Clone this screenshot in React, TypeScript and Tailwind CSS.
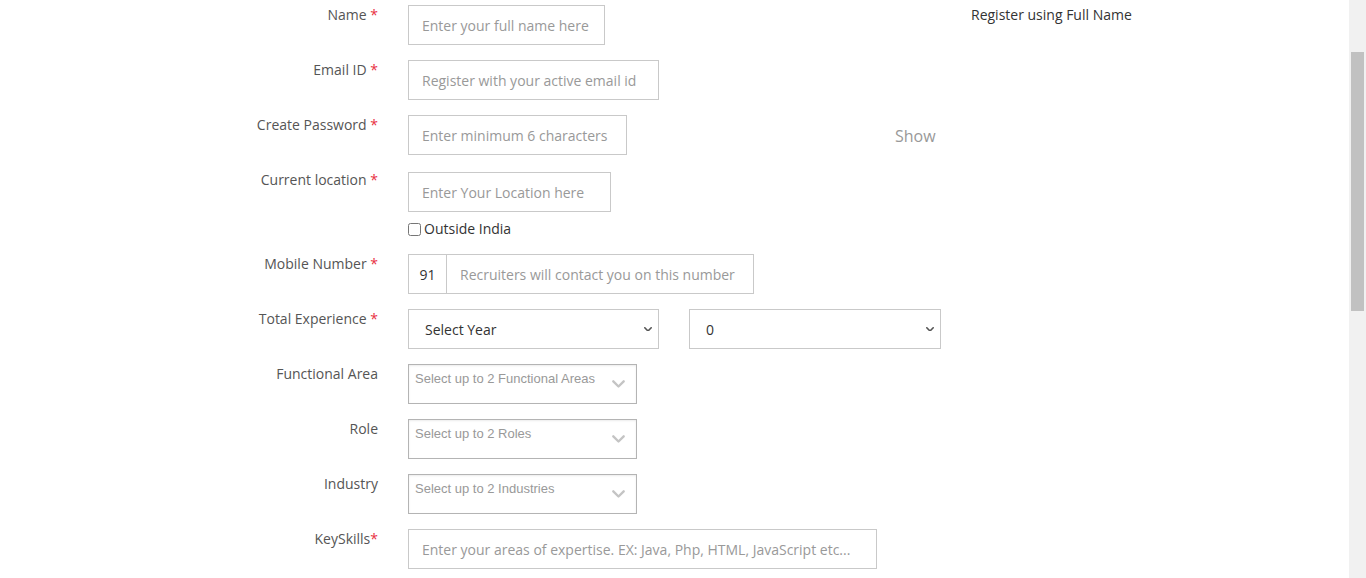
import React from "react";

const font = { fontFamily: "'Open Sans', 'Liberation Sans', sans-serif" };

function Label({ text, req = true, tight = false }: { text: string; req?: boolean; tight?: boolean }) {
  return (
    <div className="w-[378px] shrink-0 text-right text-[14px] leading-5 text-[#555]">
      {text}
      {req && <span className="text-[#e8303f]">{tight ? "*" : " *"}</span>}
    </div>
  );
}

function Chevron({ color = "#444", w = 10, sw = 1.8 }: { color?: string; w?: number; sw?: number }) {
  return (
    <svg width={w} height={w * 0.6} viewBox="0 0 10 6" fill="none">
      <path d="M1 1l4 4 4-4" stroke={color} strokeWidth={sw} strokeLinecap="round" strokeLinejoin="round" />
    </svg>
  );
}

function TextBox({ w, ph }: { w: string; ph: string }) {
  return (
    <input
      placeholder={ph}
      className={`${w} h-10 border border-[#c9c9c9] px-[13px] text-[14px] text-[#333] outline-none placeholder:text-[#999]`}
      style={font}
    />
  );
}

function SelectBox({ w, value }: { w: string; value: string }) {
  return (
    <div className={`${w} h-10 border border-[#c9c9c9] flex items-center justify-between pl-4 pr-[6px] text-[14px] text-[#333]`}>
      <span>{value}</span>
      <Chevron w={8} sw={2} color="#555" />
    </div>
  );
}

function MultiBox({ ph }: { ph: string }) {
  return (
    <div className="w-[229px] h-10 border border-[#b4b4b4] shadow-[inset_0_1px_2px_rgba(0,0,0,0.08)] flex items-start justify-between pl-[6px] pr-[11px] pt-[4px]">
      <span className="text-[13px] text-[#999]" style={{ fontFamily: "'Liberation Sans', Arial, sans-serif" }}>
        {ph}
      </span>
      <span className="mt-[11px]">
        <Chevron color="#c4c4c4" w={13} />
      </span>
    </div>
  );
}

export default function App() {
  return (
    <div className="h-[578px] w-[1366px] overflow-hidden bg-white flex" style={font}>
      <div className="flex-1 pt-[5px]">
        <div className="flex items-start gap-[30px]">
          <Label text="Name" />
          <TextBox w="w-[197px]" ph="Enter your full name here" />
          <div className="ml-[336px] text-[14px] leading-5 text-[#333]">Register using Full Name</div>
        </div>

        <div className="flex items-start gap-[30px] mt-[15px]">
          <Label text="Email ID" />
          <TextBox w="w-[251px]" ph="Register with your active email id" />
        </div>

        <div className="flex items-start gap-[30px] mt-[15px]">
          <Label text="Create Password" />
          <TextBox w="w-[219px]" ph="Enter minimum 6 characters" />
          <div className="ml-[238px] mt-[9px] text-[16px] leading-6 text-[#999]">Show</div>
        </div>

        <div className="flex items-start gap-[30px] mt-[15px]">
          <Label text="Current location" />
          <div className="mt-[2px]">
            <TextBox w="w-[203px]" ph="Enter Your Location here" />
            <label className="mt-[7px] flex items-center gap-[3px] text-[14px] leading-5 text-[#333]">
              <input type="checkbox" className="w-[13px] h-[13px] m-0" />
              Outside India
            </label>
          </div>
        </div>

        <div className="flex items-start gap-[30px] mt-[15px]">
          <Label text="Mobile Number" />
          <div className="w-[346px] h-10 border border-[#c9c9c9] flex">
            <div className="w-[38px] border-r border-[#c9c9c9] flex items-center justify-center text-[14px] text-[#333]">91</div>
            <input
              placeholder="Recruiters will contact you on this number"
              className="flex-1 min-w-0 px-[13px] text-[14px] outline-none placeholder:text-[#999]"
              style={font}
            />
          </div>
        </div>

        <div className="flex items-start gap-[30px] mt-[15px]">
          <Label text="Total Experience" />
          <SelectBox w="w-[251px]" value="Select Year" />
          <SelectBox w="w-[252px]" value="0" />
        </div>

        <div className="flex items-start gap-[30px] mt-[15px]">
          <Label text="Functional Area" req={false} />
          <MultiBox ph="Select up to 2 Functional Areas" />
        </div>

        <div className="flex items-start gap-[30px] mt-[15px]">
          <Label text="Role" req={false} />
          <MultiBox ph="Select up to 2 Roles" />
        </div>

        <div className="flex items-start gap-[30px] mt-[15px]">
          <Label text="Industry" req={false} />
          <MultiBox ph="Select up to 2 Industries" />
        </div>

        <div className="flex items-start gap-[30px] mt-[15px]">
          <Label text="KeySkills" tight />
          <input
            placeholder="Enter your areas of expertise. EX: Java, Php, HTML, JavaScript etc..."
            className="w-[469px] h-10 border border-[#c9c9c9] px-[13px] text-[14px] outline-none placeholder:text-[#999]"
            style={font}
          />
        </div>
      </div>

      <div className="w-[17px] shrink-0 bg-[#f1f1f1] pl-[2px] pr-[2px] pt-[52px]">
        <div className="h-[259px] bg-[#c1c1c1]" />
      </div>
    </div>
  );
}
